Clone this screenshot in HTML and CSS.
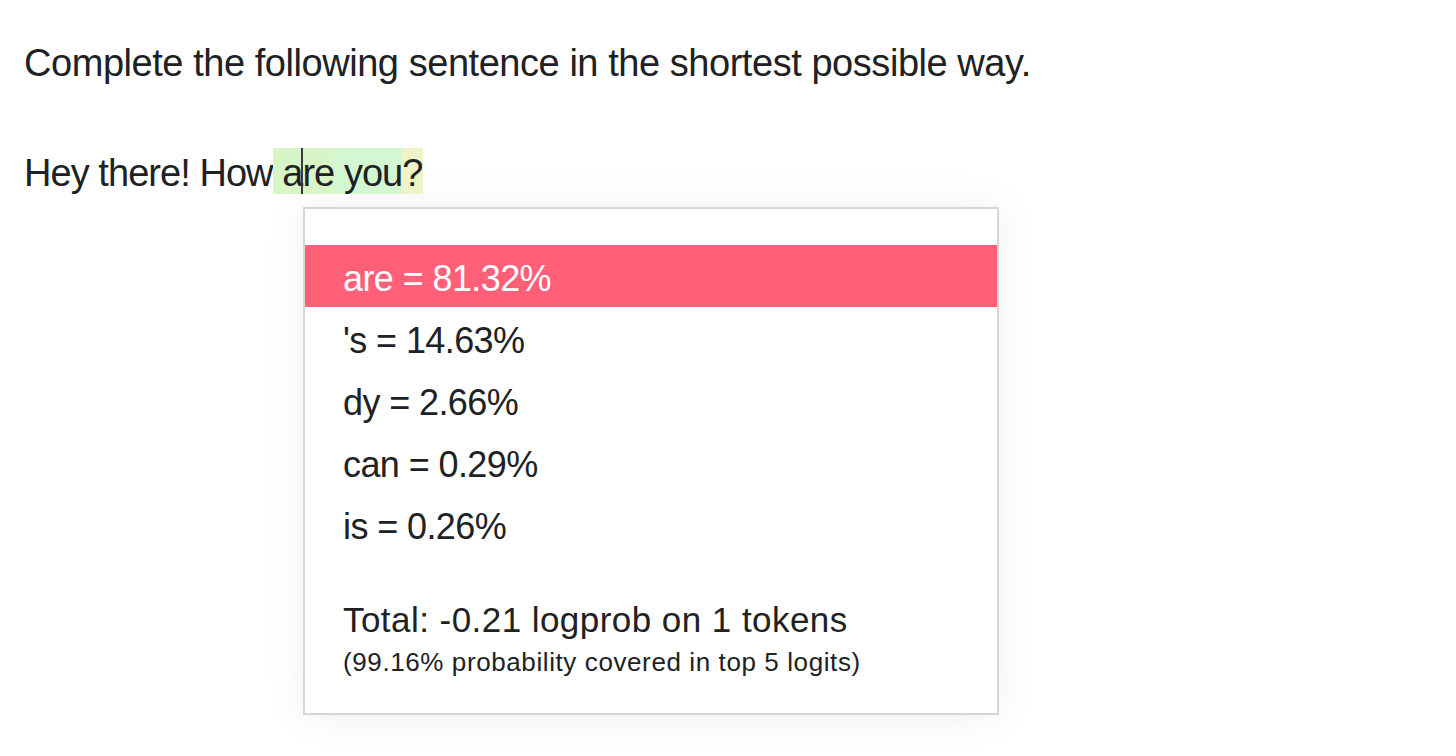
FILE: index.html
```html
<!DOCTYPE html>
<html>
<head>
<meta charset="utf-8">
<link rel="stylesheet" href="styles.css">
</head>
<body>
<main class="page">
  <p class="prompt">Complete the following sentence in the shortest possible way.</p>
  <p class="prompt completion">Hey there! How<span class="tok tok-are"> a<span class="caret"></span>re</span><span class="tok tok-you"> you</span><span class="tok tok-q">?</span></p>
  <div class="popup">
    <ul class="choices">
      <li class="choice selected">are = 81.32%</li>
      <li class="choice">'s = 14.63%</li>
      <li class="choice">dy = 2.66%</li>
      <li class="choice">can = 0.29%</li>
      <li class="choice">is = 0.26%</li>
    </ul>
    <div class="total">Total: -0.21 logprob on 1 tokens</div>
    <div class="covered">(99.16% probability covered in top 5 logits)</div>
  </div>
</main>
</body>
</html>
```

FILE: styles.css
```css
html, body {
  margin: 0;
  padding: 0;
  background: #ffffff;
}
.page {
  min-height: 756px;
  box-sizing: border-box;
  padding: 40px 24px 0 24px;
  font-family: "Liberation Sans", Arial, sans-serif;
  color: #202123;
}
.prompt {
  margin: 0;
  font-size: 38px;
  line-height: 46px;
  letter-spacing: -0.45px;
}
.completion {
  margin-top: 62px;
  letter-spacing: -0.95px;
}
.tok {
  display: inline-block;
  white-space: pre;
  line-height: 42px;
  padding-top: 4px;
}
.tok-are { background: #d8f5c8; }
.tok-you { background: #d3f7d0; }
.tok-q { background: #eff3c6; }
.caret {
  display: inline-block;
  width: 2px;
  height: 46px;
  margin: -4px -1px 0 -1px;
  background: #3a3a3a;
  vertical-align: top;
}
.popup {
  width: 696px;
  height: 508px;
  margin: 11px 0 0 279px;
  box-sizing: border-box;
  background: #ffffff;
  border: 2px solid #d6d6d6;
  box-shadow: 0 0 40px rgba(0, 0, 0, 0.07);
  padding-top: 36px;
}
.choices {
  list-style: none;
  margin: 0;
  padding: 0;
}
.choice {
  height: 62px;
  box-sizing: border-box;
  padding: 5px 0 0 38px;
  line-height: 57px;
  font-size: 36px;
  letter-spacing: -0.6px;
  color: #202123;
}
.choice.selected {
  background: #ff6078;
  color: #ffffff;
}
.total {
  margin-top: 43px;
  padding-left: 38px;
  font-size: 35px;
  line-height: 44px;
  letter-spacing: 0.45px;
}
.covered {
  margin-top: 3px;
  padding-left: 38px;
  font-size: 26px;
  line-height: 34px;
  letter-spacing: 0.6px;
}
```
